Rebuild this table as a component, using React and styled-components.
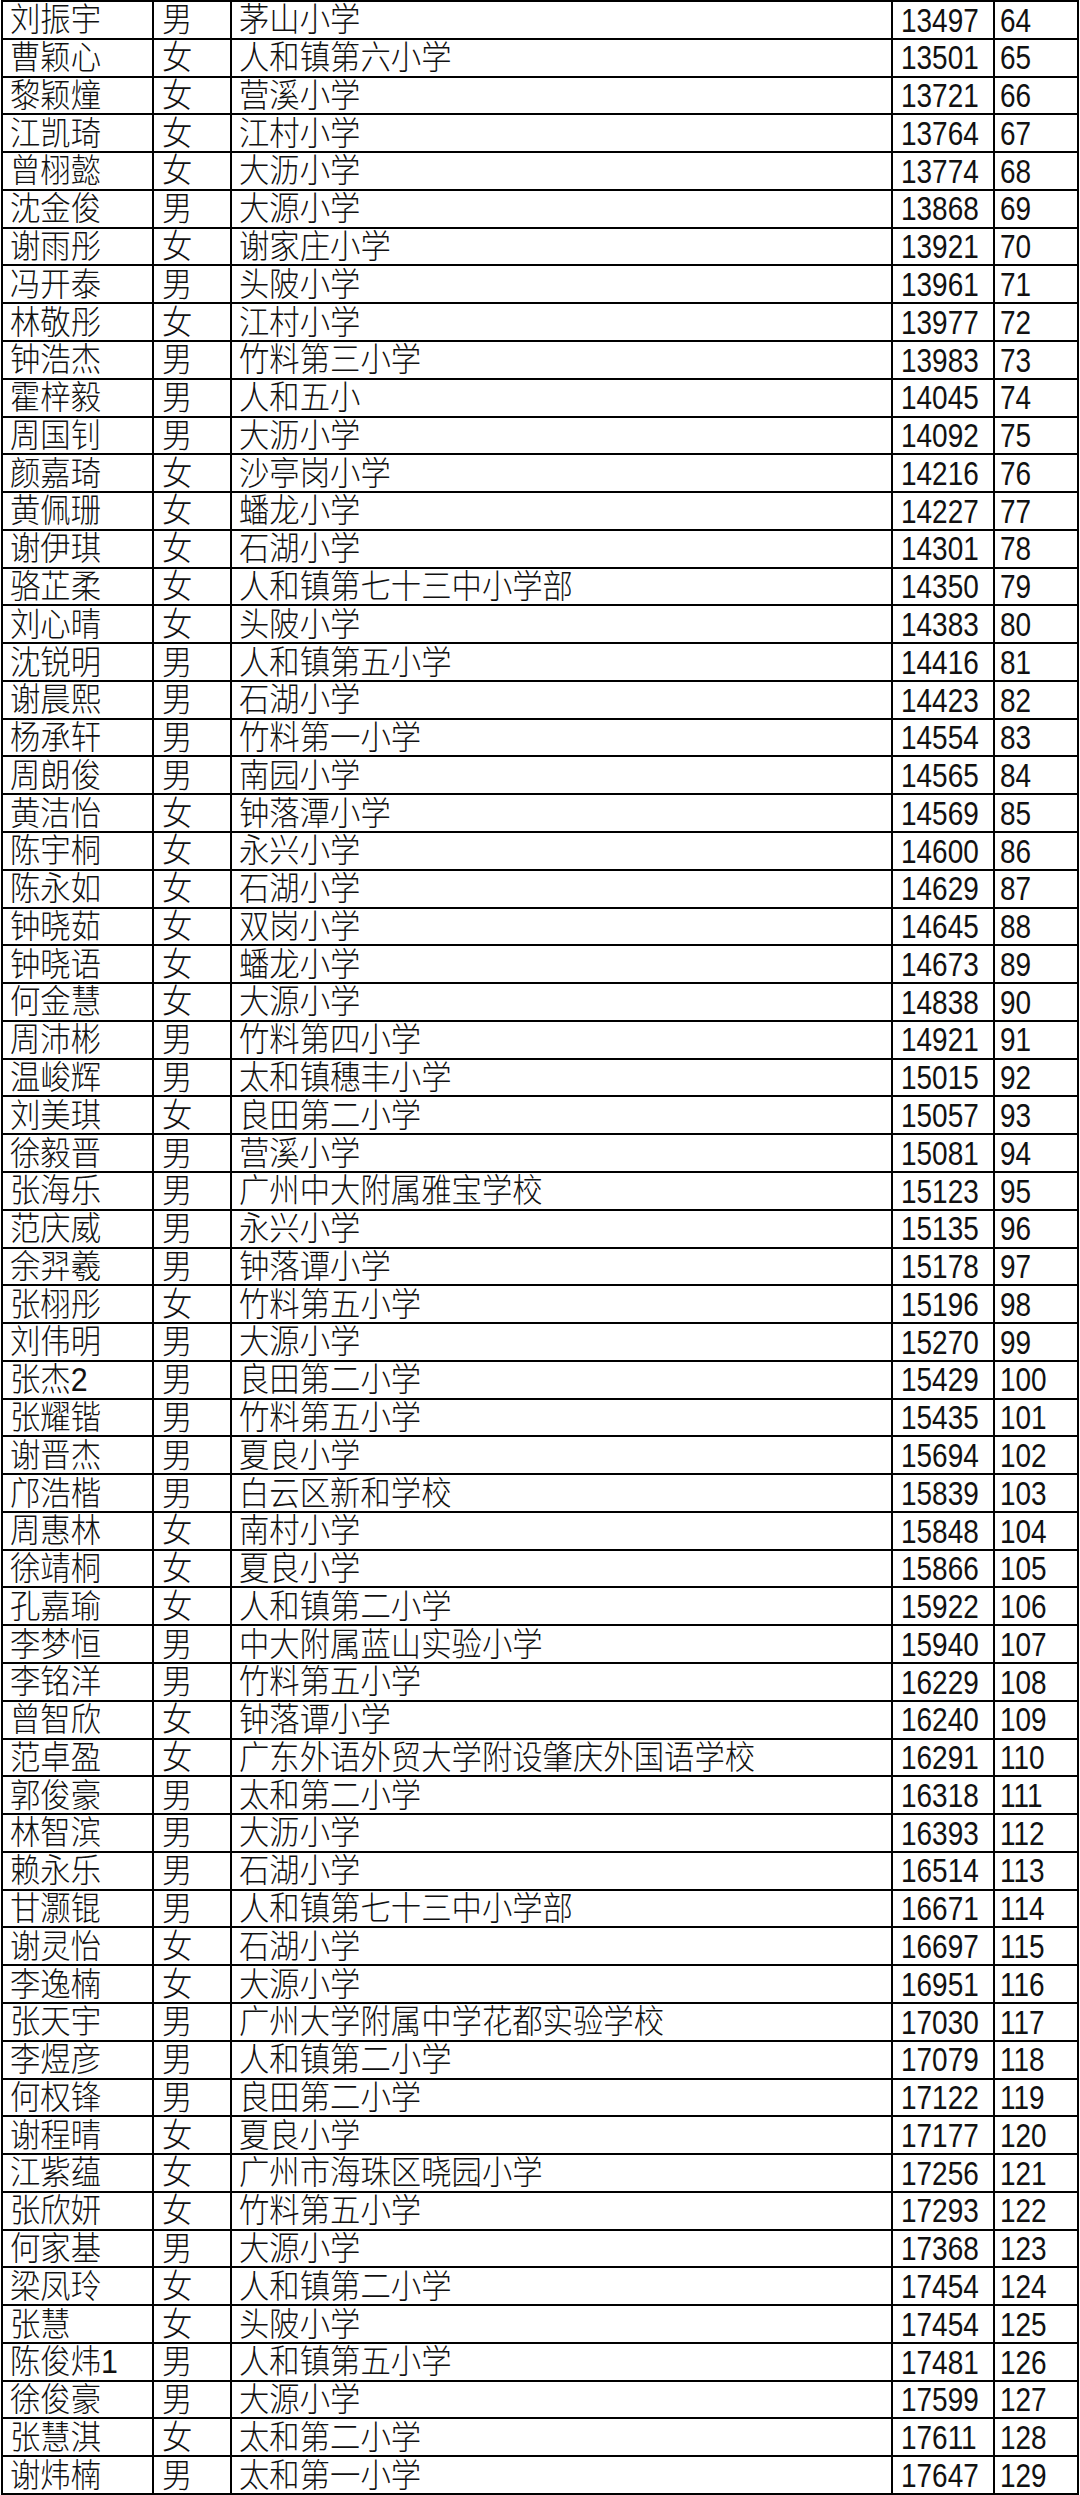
import styled, { createGlobalStyle } from 'styled-components';

const GlobalStyle = createGlobalStyle`
  html, body {
    margin: 0;
    padding: 0;
    background: #fff;
  }
  body {
    font-family: "Liberation Sans", "Noto Sans CJK SC", sans-serif;
    color: #111;
  }
`

const rows = [
  ['刘振宇', '男', '茅山小学', '13497', '64'],
  ['曹颖心', '女', '人和镇第六小学', '13501', '65'],
  ['黎颖燑', '女', '营溪小学', '13721', '66'],
  ['江凯琦', '女', '江村小学', '13764', '67'],
  ['曾栩懿', '女', '大沥小学', '13774', '68'],
  ['沈金俊', '男', '大源小学', '13868', '69'],
  ['谢雨彤', '女', '谢家庄小学', '13921', '70'],
  ['冯开泰', '男', '头陂小学', '13961', '71'],
  ['林敬彤', '女', '江村小学', '13977', '72'],
  ['钟浩杰', '男', '竹料第三小学', '13983', '73'],
  ['霍梓毅', '男', '人和五小', '14045', '74'],
  ['周国钊', '男', '大沥小学', '14092', '75'],
  ['颜嘉琦', '女', '沙亭岗小学', '14216', '76'],
  ['黄佩珊', '女', '蟠龙小学', '14227', '77'],
  ['谢伊琪', '女', '石湖小学', '14301', '78'],
  ['骆芷柔', '女', '人和镇第七十三中小学部', '14350', '79'],
  ['刘心晴', '女', '头陂小学', '14383', '80'],
  ['沈锐明', '男', '人和镇第五小学', '14416', '81'],
  ['谢晨熙', '男', '石湖小学', '14423', '82'],
  ['杨承轩', '男', '竹料第一小学', '14554', '83'],
  ['周朗俊', '男', '南园小学', '14565', '84'],
  ['黄洁怡', '女', '钟落潭小学', '14569', '85'],
  ['陈宇桐', '女', '永兴小学', '14600', '86'],
  ['陈永如', '女', '石湖小学', '14629', '87'],
  ['钟晓茹', '女', '双岗小学', '14645', '88'],
  ['钟晓语', '女', '蟠龙小学', '14673', '89'],
  ['何金慧', '女', '大源小学', '14838', '90'],
  ['周沛彬', '男', '竹料第四小学', '14921', '91'],
  ['温峻辉', '男', '太和镇穗丰小学', '15015', '92'],
  ['刘美琪', '女', '良田第二小学', '15057', '93'],
  ['徐毅晋', '男', '营溪小学', '15081', '94'],
  ['张海乐', '男', '广州中大附属雅宝学校', '15123', '95'],
  ['范庆威', '男', '永兴小学', '15135', '96'],
  ['余羿羲', '男', '钟落谭小学', '15178', '97'],
  ['张栩彤', '女', '竹料第五小学', '15196', '98'],
  ['刘伟明', '男', '大源小学', '15270', '99'],
  ['张杰2', '男', '良田第二小学', '15429', '100'],
  ['张耀锴', '男', '竹料第五小学', '15435', '101'],
  ['谢晋杰', '男', '夏良小学', '15694', '102'],
  ['邝浩楷', '男', '白云区新和学校', '15839', '103'],
  ['周惠林', '女', '南村小学', '15848', '104'],
  ['徐靖桐', '女', '夏良小学', '15866', '105'],
  ['孔嘉瑜', '女', '人和镇第二小学', '15922', '106'],
  ['李梦恒', '男', '中大附属蓝山实验小学', '15940', '107'],
  ['李铭洋', '男', '竹料第五小学', '16229', '108'],
  ['曾智欣', '女', '钟落谭小学', '16240', '109'],
  ['范卓盈', '女', '广东外语外贸大学附设肇庆外国语学校', '16291', '110'],
  ['郭俊豪', '男', '太和第二小学', '16318', '111'],
  ['林智滨', '男', '大沥小学', '16393', '112'],
  ['赖永乐', '男', '石湖小学', '16514', '113'],
  ['甘灏锟', '男', '人和镇第七十三中小学部', '16671', '114'],
  ['谢灵怡', '女', '石湖小学', '16697', '115'],
  ['李逸楠', '女', '大源小学', '16951', '116'],
  ['张天宇', '男', '广州大学附属中学花都实验学校', '17030', '117'],
  ['李煜彦', '男', '人和镇第二小学', '17079', '118'],
  ['何权锋', '男', '良田第二小学', '17122', '119'],
  ['谢程晴', '女', '夏良小学', '17177', '120'],
  ['江紫蕴', '女', '广州市海珠区晓园小学', '17256', '121'],
  ['张欣妍', '女', '竹料第五小学', '17293', '122'],
  ['何家基', '男', '大源小学', '17368', '123'],
  ['梁凤玲', '女', '人和镇第二小学', '17454', '124'],
  ['张慧', '女', '头陂小学', '17454', '125'],
  ['陈俊炜1', '男', '人和镇第五小学', '17481', '126'],
  ['徐俊豪', '男', '大源小学', '17599', '127'],
  ['张慧淇', '女', '太和第二小学', '17611', '128'],
  ['谢炜楠', '男', '太和第一小学', '17647', '129'],
]

const Sheet = styled.div`
  box-sizing: border-box;
  width: 1078px;
  height: 2495px;
  margin-left: 1px;
  border-left: 2px solid #000;
  border-top: 2px solid #000;
  display: grid;
  grid-template-rows: repeat(${rows.length}, 1fr);
`

const Row = styled.div`
  display: grid;
  grid-template-columns: 151px 78px 661px 102px 84px;
  min-height: 0;
`

const Cell = styled.div`
  box-sizing: border-box;
  border-right: 2px solid #000;
  border-bottom: 2px solid #000;
  display: flex;
  align-items: center;
  padding-left: ${p => p.$pad || 7}px;
  overflow: hidden;
  white-space: nowrap;
  min-height: 0;
`

const Text = styled.span`
  display: inline-block;
  line-height: 1;
  transform-origin: left center;
  font-size: ${p => (p.$num ? 32.5 : 33)}px;
  font-weight: ${p => (p.$num ? 400 : 300)};
  transform: scaleX(${p => (p.$num ? 0.86 : 0.92)});
  ${p => (p.$num ? 'margin-top: 2px;' : '')}
`

export default function App() {
  return (
    <>
      <GlobalStyle />
      <Sheet>
        {rows.map(([name, sex, school, score, rank]) => (
          <Row key={rank}>
            <Cell $pad={7}><Text>{name}</Text></Cell>
            <Cell $pad={8}><Text>{sex}</Text></Cell>
            <Cell $pad={7}><Text>{school}</Text></Cell>
            <Cell $pad={8}><Text $num>{score}</Text></Cell>
            <Cell $pad={5}><Text $num>{rank}</Text></Cell>
          </Row>
        ))}
      </Sheet>
    </>
  )
}
